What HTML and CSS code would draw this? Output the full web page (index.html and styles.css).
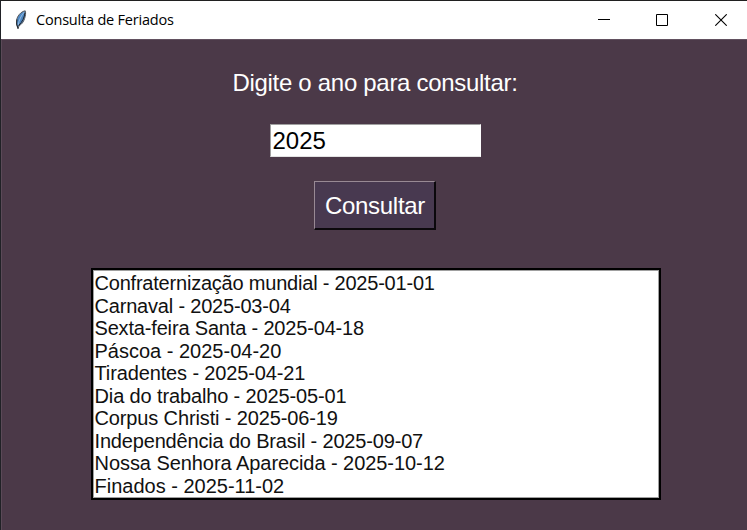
FILE: index.html
```html
<!DOCTYPE html>
<html lang="pt-BR">
<head>
<meta charset="utf-8">
<title>Consulta de Feriados</title>
<link rel="stylesheet" href="styles.css">
</head>
<body>
<div class="window">
  <header class="titlebar">
    <svg class="feather" width="14" height="20" viewBox="0 0 14 20">
      <path d="M12.200.8C9.300 1.200 6.300 3.700 4.600 7 3.300 9.500 3.300 12.500 3.800 15L5 19l1-3.200C8.500 14.500 10.600 12 11.600 8.500 12.500 6 13 3 12.200.8Z" fill="#4d88c4" stroke="#5c5d60" stroke-width="1"/>
      <path d="M11.300 2C8.200 5.500 6 10 5 15.500" fill="none" stroke="#a9c9e8" stroke-width=".8"/>
      <path d="M12 2.500C11.500 7 9.500 12 5.600 15.500M4 9.500 3.600 14 5 18" fill="none" stroke="#20262e" stroke-width="1"/>
    </svg>
    <h1 class="title">Consulta de Feriados</h1>
    <div class="controls">
      <svg width="12" height="12" viewBox="0 0 12 12"><path d="M0 5.500H12" stroke="#000"/></svg>
      <svg width="12" height="12" viewBox="0 0 12 12"><path d="M.5.5H11.500V11.500H.5Z" fill="none" stroke="#000"/></svg>
      <svg class="close" width="12" height="12" viewBox="0 0 12 12"><path d="M.3.3 11.700 11.700M11.700.3.3 11.700" stroke="#000" stroke-width="1.100"/></svg>
    </div>
  </header>
  <main class="content">
    <label class="prompt" for="ano">Digite o ano para consultar:</label>
    <input class="year" id="ano" type="text" value="2025">
    <button class="submit" type="button">Consultar</button>
    <ul class="results">
      <li>Confraternização mundial - 2025-01-01</li>
      <li>Carnaval - 2025-03-04</li>
      <li>Sexta-feira Santa - 2025-04-18</li>
      <li>Páscoa - 2025-04-20</li>
      <li>Tiradentes - 2025-04-21</li>
      <li>Dia do trabalho - 2025-05-01</li>
      <li>Corpus Christi - 2025-06-19</li>
      <li>Independência do Brasil - 2025-09-07</li>
      <li>Nossa Senhora Aparecida - 2025-10-12</li>
      <li>Finados - 2025-11-02</li>
    </ul>
  </main>
</div>
</body>
</html>
```
FILE: styles.css
```css
* { box-sizing: border-box; }
body {
  margin: 0;
  background: #4b3948;
  font-family: "Liberation Sans", Arial, sans-serif;
  overflow: hidden;
}
.window {
  height: 530px;
  border-top: 1px solid #202020;
  border-left: 1px solid #202126;
}
.titlebar {
  display: flex;
  align-items: center;
  height: 38px;
  padding: 0 20px 0 12px;
  background: #fff;
}
.feather { margin-right: 9px; }
.title {
  margin: 0 0 1px;
  font: 400 14.500px "Open Sans", "Segoe UI", sans-serif;
  letter-spacing: -.2px;
  color: #000;
}
.controls { display: flex; gap: 46px; margin-left: auto; }
.controls svg { display: block; }
.controls .close { margin-left: 1px; }
.content {
  display: flex;
  flex-direction: column;
  align-items: center;
  height: 491px;
  padding-top: 28px;
  border-top: 1px solid #625160;
  border-left: 1px solid #5b4a58;
}
.prompt {
  margin-left: 1px;
  font-size: 24px;
  line-height: 30px;
  letter-spacing: -.3px;
  color: #fff;
}
.year {
  width: 211px;
  height: 33px;
  margin: 26px 0 0 1px;
  padding: 0 2px;
  border: 1px solid;
  border-color: #a0a0a0 #fff #e3e3e3 #a0a0a0;
  border-radius: 0;
  outline: none;
  background: #fff;
  font: 24px "Liberation Sans", Arial, sans-serif;
  color: #000;
}
.submit {
  width: 122px;
  height: 49px;
  margin-top: 24px;
  padding: 2px 0 0 2px;
  border: solid;
  border-width: 1px 2px 2px 1px;
  border-color: #988994 #0b080c #0b080c #988994;
  background: #483950;
  font: 24px "Liberation Sans", Arial, sans-serif;
  letter-spacing: -.3px;
  color: #fff;
}
.results {
  width: 570px;
  height: 232px;
  margin: 38px 0 0 2px;
  padding: 2px;
  border: 2px solid #000;
  box-shadow: inset 0 0 0 1px #a0a0a0;
  background: #fff;
  list-style: none;
  font-size: 20px;
  line-height: 22.500px;
  letter-spacing: -.13px;
  color: #111;
}
.results li:nth-child(1) { letter-spacing: -.21px; }
.results li:nth-child(2) { letter-spacing: -.19px; }
.results li:nth-child(3),
.results li:nth-child(8) { letter-spacing: -.17px; }
.results li:nth-child(4),
.results li:nth-child(10) { letter-spacing: 0; }
.results li:nth-child(9) { letter-spacing: -.06px; }
```
